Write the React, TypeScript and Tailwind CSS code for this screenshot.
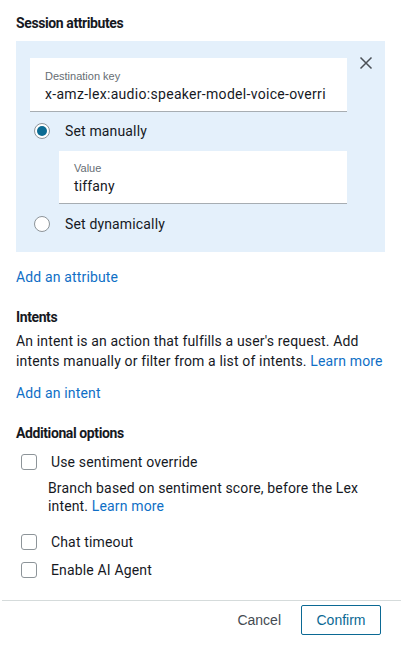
import React from "react";

const font = { fontFamily: 'Roboto, "Noto Sans", sans-serif' };

function Radio({ checked }: { checked?: boolean }) {
  return checked ? (
    <span className="flex h-4 w-4 items-center justify-center rounded-full border border-[#8d9499] bg-white">
      <span className="h-[10px] w-[10px] rounded-full bg-[#0b6b93]" />
    </span>
  ) : (
    <span className="h-4 w-4 rounded-full border border-[#8d9499] bg-white" />
  );
}

function Checkbox() {
  return <span className="h-4 w-4 rounded-[3px] border border-[#8d9499] bg-white" />;
}

export default function App() {
  return (
    <div className="w-[401px] h-[653px] bg-white text-[#16191f] text-[14px] tracking-[0.15px]" style={font}>
      <div className="px-4 pt-[13px]">
        <div className="font-bold leading-5 tracking-[-0.4px]">Session attributes</div>
        <div className="mt-2 flex bg-[#e4f0fb] pl-[14px] pt-[17px] pb-[17px]">
          <div className="w-[317px]">
            <div className="h-[54px] bg-white border-b border-[#a7adb2] pl-[15px] pt-[10px]">
              <div className="text-[11px] leading-4 text-[#666d73] tracking-normal" style={{ fontFamily: '"Liberation Sans", Arial, sans-serif' }}>
                Destination key
              </div>
              <div className="leading-5 whitespace-nowrap overflow-hidden tracking-[0.3px]">x-amz-lex:audio:speaker-model-voice-overri</div>
            </div>
            <div className="mt-2 flex h-[22px] items-center pl-1">
              <Radio checked />
              <span className="ml-[15px] leading-5">Set manually</span>
            </div>
            <div className="mt-[9px] ml-[29px] h-[53px] bg-white border-b border-[#a7adb2] pl-[15px] pt-[9px]">
              <div className="text-[11px] leading-4 text-[#666d73] tracking-normal" style={{ fontFamily: '"Liberation Sans", Arial, sans-serif' }}>
                Value
              </div>
              <div className="leading-5">tiffany</div>
            </div>
            <div className="mt-[9px] flex h-[22px] items-center pl-1">
              <Radio />
              <span className="ml-[15px] leading-5">Set dynamically</span>
            </div>
          </div>
          <div className="flex flex-1 justify-center">
            <svg width="14" height="14" viewBox="0 0 14 14" className="-mt-[2px]">
              <path d="M1.5 1.5 L12.5 12.5 M12.5 1.5 L1.5 12.5" stroke="#4a5056" strokeWidth="1.5" fill="none" />
            </svg>
          </div>
        </div>
        <div className="mt-[15px] leading-5 text-[#0f6fc6]">Add an attribute</div>
        <div className="mt-5 font-bold leading-5 tracking-[-0.4px]">Intents</div>
        <div className="mt-1 leading-5 whitespace-nowrap">
          An intent is an action that fulfills a user's request. Add
          <br />
          intents manually or filter from a list of intents. <span className="text-[#0f6fc6]">Learn more</span>
        </div>
        <div className="mt-3 leading-5 text-[#0f6fc6]">Add an intent</div>
        <div className="mt-5 font-bold leading-5 tracking-[-0.4px]">Additional options</div>
        <div className="mt-[9px] flex h-5 items-center pl-[5px]">
          <Checkbox />
          <span className="ml-[14px]">Use sentiment override</span>
        </div>
        <div className="mt-[7px] pl-8 leading-[18px] whitespace-nowrap">
          Branch based on sentiment score, before the Lex
          <br />
          intent. <span className="text-[#0f6fc6]">Learn more</span>
        </div>
        <div className="mt-[17px] flex h-5 items-center pl-[5px]">
          <Checkbox />
          <span className="ml-[14px]">Chat timeout</span>
        </div>
        <div className="mt-2 flex h-5 items-center pl-[5px]">
          <Checkbox />
          <span className="ml-[14px]">Enable AI Agent</span>
        </div>
      </div>
      <div className="mt-5 ml-[2px] border-t border-[#d5dbdb]" />
      <div className="mt-1 flex items-center justify-end pr-5 tracking-normal" style={{ fontFamily: '"Liberation Sans", Arial, sans-serif' }}>
        <span className="mr-5 text-[#444b52]">Cancel</span>
        <span className="flex h-[30px] w-[80px] items-center justify-center rounded-[2px] border border-[#0b6994] text-[#0b6994]">
          Confirm
        </span>
      </div>
    </div>
  );
}
